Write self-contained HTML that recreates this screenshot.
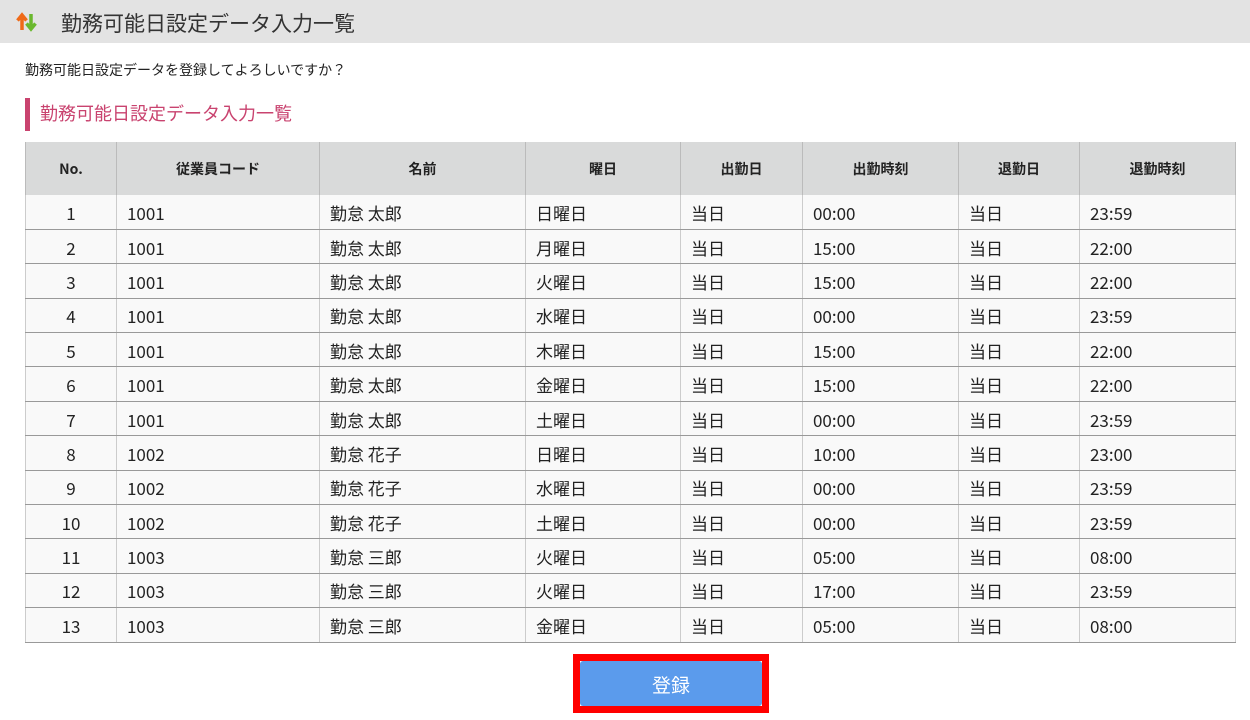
<!DOCTYPE html>
<html><head><meta charset="utf-8"><style>
*{margin:0;padding:0;box-sizing:border-box}
body{width:1250px;height:720px;background:#fff;font-family:"Liberation Sans","Noto Sans CJK JP",sans-serif;color:#222;position:relative;overflow:hidden}
.hdr{position:absolute;left:0;top:0;width:1250px;height:43px;background:#e3e3e3}
.hdr .t{position:absolute;left:61px;top:8px;font-size:21px;color:#333}
.msg{position:absolute;left:25px;top:60px;font-size:14px}
.sec{position:absolute;left:25px;top:98px;height:33px;border-left:5px solid #c9436f;padding-left:10px;font-size:18px;color:#c9436f;line-height:33px}
table{position:absolute;left:25px;top:142px;border-collapse:collapse;width:1210px;table-layout:fixed}
th{background:#d9dada;height:53px;font-size:14px;font-weight:bold;border-left:1px solid #bbb;border-right:1px solid #bbb;color:#222;font-family:"Noto Sans CJK JP",sans-serif}
td{height:34.4px;font-size:17px;line-height:20px;background:#f9f9f9;border-bottom:1px solid #999;border-left:1px solid #ccc;border-right:1px solid #ccc;padding-left:10px;padding-top:2px;font-family:"Noto Sans CJK JP",sans-serif}
td:first-child{text-align:center;padding-left:0}
.btn{position:absolute;left:573px;top:654px;width:196px;height:59px;border:7px solid #f00;background:#fff}
.btn div{width:182px;height:45px;background:#5b9bec;border-radius:3px;color:#fff;font-size:19px;text-align:center;line-height:47px;font-family:"Noto Sans CJK JP",sans-serif}
</style></head><body>
<div class="hdr"><svg style="position:absolute;left:16px;top:12px" width="22" height="20" viewBox="0 0 22 20"><path d="M6 18V4M1.5 8.5L6 3l4.5 5.5" stroke="#ef6a18" stroke-width="3.5" fill="none"/><path d="M15 2v14M10.5 11.5L15 17l4.5-5.5" stroke="#6ab82e" stroke-width="3.5" fill="none"/></svg><div class="t">勤務可能日設定データ入力一覧</div></div>
<div class="msg">勤務可能日設定データを登録してよろしいですか？</div>
<div class="sec">勤務可能日設定データ入力一覧</div>
<table>
<colgroup><col style="width:91px"><col style="width:203px"><col style="width:206px"><col style="width:155px"><col style="width:122px"><col style="width:156px"><col style="width:121px"><col style="width:156px"></colgroup>
<tr><th>No.</th><th>従業員コード</th><th>名前</th><th>曜日</th><th>出勤日</th><th>出勤時刻</th><th>退勤日</th><th>退勤時刻</th></tr>
<tr><td>1</td><td>1001</td><td>勤怠 太郎</td><td>日曜日</td><td>当日</td><td>00:00</td><td>当日</td><td>23:59</td></tr>
<tr><td>2</td><td>1001</td><td>勤怠 太郎</td><td>月曜日</td><td>当日</td><td>15:00</td><td>当日</td><td>22:00</td></tr>
<tr><td>3</td><td>1001</td><td>勤怠 太郎</td><td>火曜日</td><td>当日</td><td>15:00</td><td>当日</td><td>22:00</td></tr>
<tr><td>4</td><td>1001</td><td>勤怠 太郎</td><td>水曜日</td><td>当日</td><td>00:00</td><td>当日</td><td>23:59</td></tr>
<tr><td>5</td><td>1001</td><td>勤怠 太郎</td><td>木曜日</td><td>当日</td><td>15:00</td><td>当日</td><td>22:00</td></tr>
<tr><td>6</td><td>1001</td><td>勤怠 太郎</td><td>金曜日</td><td>当日</td><td>15:00</td><td>当日</td><td>22:00</td></tr>
<tr><td>7</td><td>1001</td><td>勤怠 太郎</td><td>土曜日</td><td>当日</td><td>00:00</td><td>当日</td><td>23:59</td></tr>
<tr><td>8</td><td>1002</td><td>勤怠 花子</td><td>日曜日</td><td>当日</td><td>10:00</td><td>当日</td><td>23:00</td></tr>
<tr><td>9</td><td>1002</td><td>勤怠 花子</td><td>水曜日</td><td>当日</td><td>00:00</td><td>当日</td><td>23:59</td></tr>
<tr><td>10</td><td>1002</td><td>勤怠 花子</td><td>土曜日</td><td>当日</td><td>00:00</td><td>当日</td><td>23:59</td></tr>
<tr><td>11</td><td>1003</td><td>勤怠 三郎</td><td>火曜日</td><td>当日</td><td>05:00</td><td>当日</td><td>08:00</td></tr>
<tr><td>12</td><td>1003</td><td>勤怠 三郎</td><td>火曜日</td><td>当日</td><td>17:00</td><td>当日</td><td>23:59</td></tr>
<tr><td>13</td><td>1003</td><td>勤怠 三郎</td><td>金曜日</td><td>当日</td><td>05:00</td><td>当日</td><td>08:00</td></tr>
</table>
<div class="btn"><div>登録</div></div>
</body></html>
